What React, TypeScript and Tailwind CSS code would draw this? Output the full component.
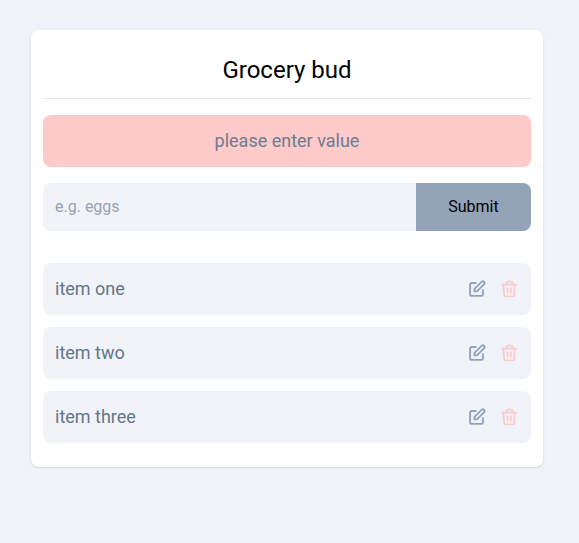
import { useState } from "react";
import type { FormEvent } from "react";

const initialItems = ["item one", "item two", "item three"];

function EditIcon() {
  return (
    <svg viewBox="0 0 20 20" className="size-5" fill="none" stroke="currentColor" strokeWidth="1.9" strokeLinecap="round" strokeLinejoin="round" aria-hidden="true">
      <path d="M8.7 4H4.6a1.5 1.5 0 0 0-1.5 1.5v9.9a1.5 1.5 0 0 0 1.5 1.5h9.9a1.5 1.5 0 0 0 1.5-1.5v-4.2" />
      <path d="M7.5 12.4v-2.5l7-7a1.7 1.7 0 0 1 2.5 2.5l-7 7Z" />
    </svg>
  );
}

function TrashIcon() {
  return (
    <svg viewBox="0 0 20 20" className="size-5" fill="none" stroke="currentColor" strokeWidth="1.8" strokeLinecap="round" strokeLinejoin="round" aria-hidden="true">
      <path d="M3.2 5.5h13.8M7.3 5.2V3.6a1 1 0 0 1 1-1h3.8a1 1 0 0 1 1 1v1.6" />
      <path d="m4.4 5.8.8 10.4a1.3 1.3 0 0 0 1.3 1.2h7.3a1.3 1.3 0 0 0 1.3-1.2l.8-10.4" />
      <path d="M8.5 9.5v4.2M11.7 9.5v4.2" />
    </svg>
  );
}

export default function App() {
  const [items, setItems] = useState<string[]>(initialItems);
  const [value, setValue] = useState("");
  const [alert, setAlert] = useState("please enter value");

  const submit = (event: FormEvent) => {
    event.preventDefault();
    if (!value.trim()) {
      setAlert("please enter value");
      return;
    }
    setItems([...items, value.trim()]);
    setValue("");
    setAlert("");
  };

  const edit = (index: number) => {
    setValue(items[index]);
    setItems(items.filter((_, i) => i !== index));
  };

  return (
    <main className="min-h-screen bg-[#f0f4f8] py-[30px] pr-9 pl-[31px] font-['Roboto',sans-serif]">
      <section className="mx-auto max-w-lg rounded-lg bg-white px-3 pt-6 pb-6 shadow">
        <h1 className="border-b border-gray-200 pb-3 text-center text-2xl text-black">Grocery bud</h1>
        {alert && (
          <p role="alert" className="mt-4 rounded-lg bg-[#fecaca] py-3 text-center text-lg leading-7 text-[#6f7c8c]">
            {alert}
          </p>
        )}
        <form onSubmit={submit} className="mt-4 flex h-12">
          <input
            aria-label="Grocery item"
            placeholder="e.g. eggs"
            value={value}
            onChange={(event) => setValue(event.target.value)}
            className="min-w-0 flex-1 rounded-l-lg bg-[#f0f4f8] px-3 text-base outline-none placeholder:text-gray-400"
          />
          <button type="submit" className="w-[115px] rounded-r-lg bg-[#94a3b8] text-base text-black">
            Submit
          </button>
        </form>
        <ul className="mt-8 flex flex-col gap-3">
          {items.map((item, index) => (
            <li key={index} className="flex items-center justify-between rounded-lg bg-[#f0f4f8] p-3 text-lg leading-7 text-[#64748b]">
              <span>{item}</span>
              <span className="flex gap-3">
                <button type="button" aria-label={`Edit ${item}`} onClick={() => edit(index)} className="text-[#94a3b8]">
                  <EditIcon />
                </button>
                <button
                  type="button"
                  aria-label={`Delete ${item}`}
                  onClick={() => setItems(items.filter((_, i) => i !== index))}
                  className="text-[#fecaca]"
                >
                  <TrashIcon />
                </button>
              </span>
            </li>
          ))}
        </ul>
      </section>
    </main>
  );
}
